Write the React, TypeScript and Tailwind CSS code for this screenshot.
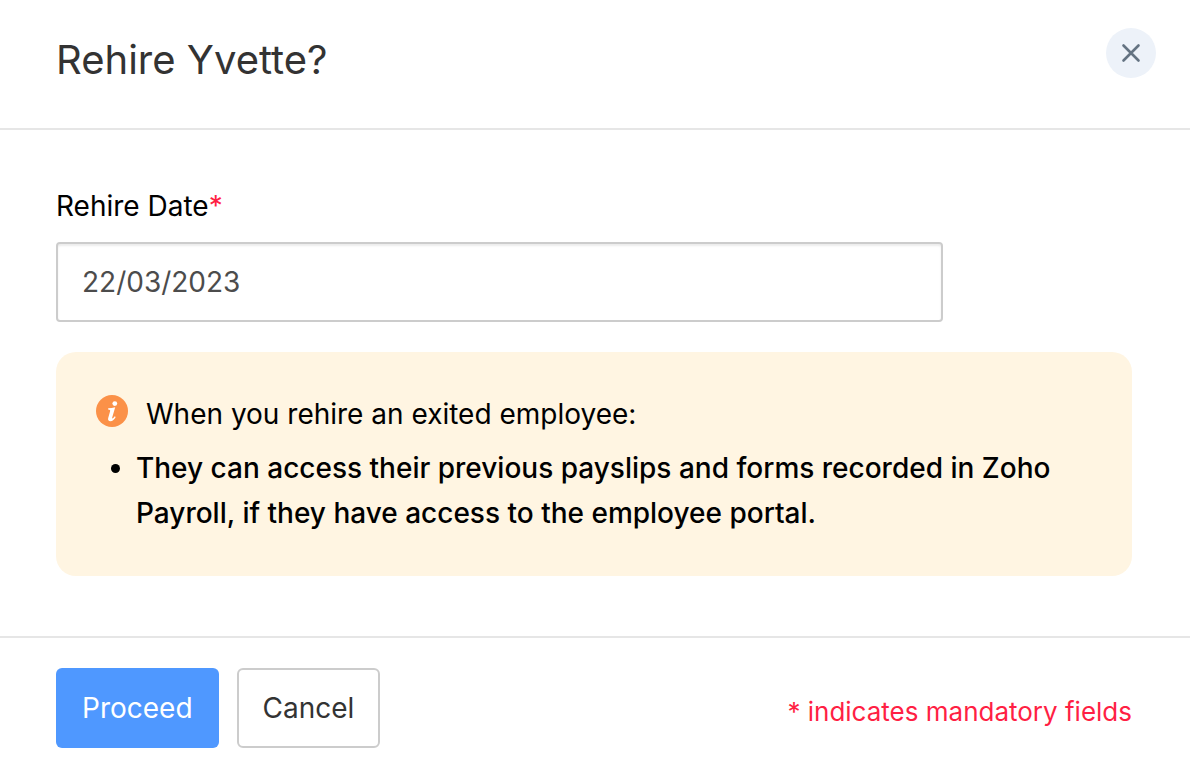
import { useState } from 'react';

const NOTES = [
    'They can access their previous payslips and forms recorded in Zoho Payroll, if they have access to the employee portal.'
];

const InfoIcon = () => (
    <svg className="w-8 h-8 shrink-0" viewBox="0 0 32 32" aria-hidden="true">
        <circle cx="16" cy="16" r="16" fill="#fb9148" />
        <circle cx="18.8" cy="8.6" r="2.4" fill="#fff" />
        <path d="M12.2 13.2c2.4-.1 4.8-.5 7-1l-3 10.3c-.3 1 .2 1.300 1 .6.6-.5 1-1.100 1.500-1.800l1 .7c-1.300 2.500-3.100 4.200-5.200 4.200-2 0-2.900-1.400-2.300-3.300l1.900-6.700c.3-1.100-.1-1.700-2-1.800z" fill="#fff" />
    </svg>
);

export default function App() {
    const [date, setDate] = useState('22/03/2023');

    return (
        <div role="dialog" aria-labelledby="title" className="min-h-screen bg-white text-black font-['Inter',sans-serif]">
            <header className="flex items-start justify-between pl-14 pr-[34px] pt-7 h-[130px] border-b-2 border-[#e6e6e6]">
                <h1 id="title" className="text-[40px] leading-[64px] text-[#333]">Rehire Yvette?</h1>
                <button aria-label="Close" className="flex items-center justify-center w-[50px] h-[50px] rounded-full bg-[#edf2f9]">
                    <svg className="w-5 h-5" viewBox="0 0 20 20" fill="none" stroke="#647382" strokeWidth="2.6" strokeLinecap="round">
                        <path d="M2.500 2.500l15 15M17.500 2.500l-15 15" />
                    </svg>
                </button>
            </header>

            <main className="pl-14 pr-[58px] pt-14 pb-[60px]">
                <label htmlFor="rehire-date" className="block text-[28px] leading-10 mb-4">
                    Rehire Date<span className="text-[#ff1f44]">*</span>
                </label>
                <input
                    id="rehire-date"
                    value={date}
                    onChange={(e) => setDate(e.target.value)}
                    className="block w-full max-w-[887px] h-20 px-6 text-[28px] text-[#4c4c4c] border-2 border-[#ccc] rounded-sm shadow-[inset_0_2px_2px_rgba(0,0,0,0.08)]"
                />

                {/* Info box */}
                <section className="mt-[30px] p-10 rounded-[20px] bg-[#fff5e2] text-[28px] leading-[45px]">
                    <div className="flex items-start gap-[18px]">
                        <div className="pt-[3px]">
                            <InfoIcon />
                        </div>
                        <p>When you rehire an exited employee:</p>
                    </div>
                    <ul className="mt-[9px] pl-10 list-disc font-medium">
                        {NOTES.map((note) => (
                            <li key={note}>{note}</li>
                        ))}
                    </ul>
                </section>
            </main>

            <footer className="flex items-center justify-between pl-14 pr-[58px] pt-[30px] border-t-2 border-[#e6e6e6]">
                <div className="flex gap-[18px] text-[28px]">
                    <button className="h-20 px-[26px] rounded-md bg-[#4f98ff] text-white">Proceed</button>
                    <button className="h-20 px-6 rounded-md border-2 border-[#ccc] bg-white text-[#333]">Cancel</button>
                </div>
                <p className="pt-1.5 text-[26px] text-[#ff1f44]">* indicates mandatory fields</p>
            </footer>
        </div>
    );
}
